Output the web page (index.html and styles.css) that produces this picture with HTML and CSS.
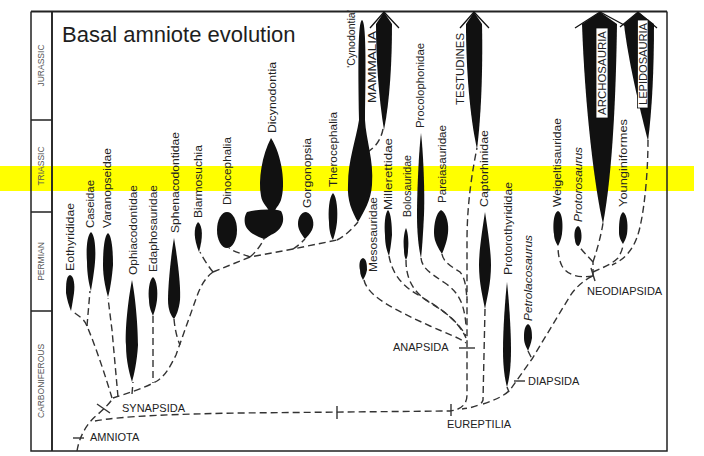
FILE: index.html
```html
<!DOCTYPE html>
<html lang="en">
<head>
<meta charset="utf-8">
<title>Basal amniote evolution</title>
<link rel="stylesheet" href="styles.css">
</head>
<body>
<main class="page">
<svg class="diagram" viewBox="0 0 704 456" width="704" height="456" xmlns="http://www.w3.org/2000/svg">
  <rect class="band" x="0" y="166" width="694" height="25"/>

  <g class="frame">
    <path class="frame-line frame-top" d="M31 11.5 H667"/>
    <path class="frame-line" d="M31 11.5 V451 H667 V11.5"/>
    <path class="frame-line frame-axis" d="M52 11.5 V451"/>
    <path class="frame-line" d="M31 120 H52 M31 212 H52 M31 311 H52"/>
  </g>

  <g class="periods">
    <text class="period" transform="translate(44,65.5) rotate(-90)">JURASSIC</text>
    <text class="period" transform="translate(44,166) rotate(-90)">TRIASSIC</text>
    <text class="period" transform="translate(44,261.5) rotate(-90)">PERMIAN</text>
    <text class="period" transform="translate(44,381) rotate(-90)">CARBONIFEROUS</text>
  </g>

  <text class="title" x="62" y="42">Basal amniote evolution</text>

  <g class="branches">
    <path class="branch" d="M77 451 C79 438, 86 424, 97 415 C104 409, 110 403, 113 398"/>
    <path class="branch" d="M112 398 C106 378, 97 350, 87 326"/>
    <path class="branch" d="M87 326 C84 318, 77 315, 72 311"/>
    <path class="branch" d="M87 326 L90 291"/>
    <path class="branch" d="M118 397 L112 330 L108 298"/>
    <path class="branch" d="M113 398 C125 394, 145 388, 157 381 C165 376, 170 367, 176 355 L197 296 C201 285, 206 277, 213 272"/>
    <path class="branch" d="M132 394 L133 382"/>
    <path class="branch" d="M153 316 L153 383"/>
    <path class="branch" d="M174 319 C175 330, 177 338, 180 345"/>
    <path class="branch" d="M213 272 C208 266, 203 258, 200 252"/>
    <path class="branch" d="M213 272 L250 257 L293 249 L337 240"/>
    <path class="branch" d="M250 257 C243 254, 234 252, 229 248"/>
    <path class="branch" d="M250 257 C256 252, 261 245, 264 239"/>
    <path class="branch" d="M293 249 C298 246, 302 242, 305 239"/>
    <path class="branch" d="M337 240 C345 236, 352 229, 358 222"/>
    <path class="branch" d="M383 129 C381 140, 375 148, 366 153"/>

    <path class="branch" d="M95 421 C120 416, 180 414, 240 413 L450 411 C460 410, 467 405, 467 395 L467 240 C467 205, 472 172, 477 148"/>
    <path class="branch" d="M485 309 L483 400 C482 404, 478 407, 462 409"/>
    <path class="branch" d="M483 404 C495 400, 504 396, 510 390 L532 359 L570 296 C576 287, 584 280, 593 276"/>
    <path class="branch" d="M507 387 L509 392"/>
    <path class="branch" d="M528 351 L532 359"/>
    <path class="branch" d="M593 276 C580 278, 568 276, 562 266 C559 260, 558 253, 558 246"/>
    <path class="branch" d="M593 276 L593 262"/>
    <path class="branch" d="M593 262 C588 256, 583 252, 579 246"/>
    <path class="branch" d="M593 262 C597 250, 601 236, 603 223"/>
    <path class="branch" d="M593 272 C602 268, 612 264, 618 258 C621 253, 623 248, 623 244"/>
    <path class="branch" d="M648 140 C648 170, 645 205, 640 227 C636 245, 628 258, 612 265"/>

    <path class="branch" d="M364 280 C368 298, 400 312, 430 326 C448 334, 460 338, 466 343"/>
    <path class="branch" d="M389 256 C392 272, 400 285, 420 296 C440 308, 458 320, 466 338"/>
    <path class="branch" d="M406 260 C406 276, 411 292, 432 304 C450 315, 460 325, 466 336"/>
    <path class="branch" d="M421 258 C422 268, 430 273, 445 283 C458 292, 464 302, 466 325"/>
    <path class="branch" d="M442 254 C443 262, 452 267, 460 272 C465 278, 466 286, 467 300"/>
  </g>

  <g class="ticks">
    <path class="tick" d="M97 404 L110 413"/>
    <path class="tick" d="M73 438 L84 438"/>
    <path class="tick" d="M337 406 L337 419"/>
    <path class="tick" d="M451 404 L451 416"/>
    <path class="tick" d="M459 348 L475 348"/>
    <path class="tick" d="M514 381 L525 381"/>
    <path class="tick" d="M591 268 L595 281"/>
  </g>

  <g class="shapes">
    <path class="shape" d="M70 275 C74 276, 75 285, 74 293 C73 300, 72 306, 71 311 C69 306, 67 300, 66 293 C66 285, 66 276, 70 275Z"/>
    <path class="shape" d="M91 232 C95 235, 96 250, 95 262 C94 274, 92 284, 91 291 C89 284, 87 274, 87 262 C86 250, 87 235, 91 232Z"/>
    <path class="shape" d="M108 233 C112 236, 113 252, 113 265 C112 278, 110 290, 108 297 C106 290, 103 278, 103 265 C103 252, 104 236, 108 233Z"/>
    <path class="shape" d="M132 280 C136 300, 138 330, 138 345 C137 362, 134 375, 132 382 C130 375, 126 362, 126 345 C125 330, 128 300, 132 280Z"/>
    <path class="shape" d="M153 277 C157 280, 158 292, 157 300 C156 308, 154 313, 153 316 C152 313, 149 308, 149 300 C148 292, 149 280, 153 277Z"/>
    <path class="shape" d="M174 238 C177 255, 181 285, 180 300 C179 310, 176 316, 174 319 C171 316, 168 310, 168 300 C168 285, 171 255, 174 238Z"/>
    <path class="shape" d="M198 222 C203 226, 203 238, 199 252 C194 240, 193 228, 198 222Z"/>
    <ellipse class="shape" cx="227" cy="230" rx="10" ry="18"/>
    <path class="shape" d="M271 138 C282 155, 286 185, 281 200 C279 206, 275 208, 275 212 L269 212 C269 208, 262 204, 261 196 C258 180, 262 155, 271 138Z"/>
    <path class="shape" d="M247 212 C258 209, 275 209, 281 211 C285 218, 284 228, 273 234 C268 236, 266 239, 264 239 C256 236, 247 232, 245 224 C244 219, 245 215, 247 212Z"/>
    <path class="shape" d="M306 212 C313 214, 315 224, 312 230 C310 234, 307 237, 305 239 C302 235, 298 230, 298 224 C298 218, 301 212, 306 212Z"/>
    <path class="shape" d="M333 193 C337 197, 338 212, 337 222 C336 231, 334 237, 333 240 C331 237, 329 231, 329 222 C328 212, 329 197, 333 193Z"/>
    <path class="shape" d="M362 20 C366 22, 366 60, 365 120 C366 140, 374 160, 372 185 C371 200, 364 212, 358 222 C352 212, 347 200, 348 185 C348 160, 356 140, 359 120 C358 60, 358 22, 362 20Z"/>
    <path class="shape" d="M384 12 L392 24 C392 60, 390 100, 384 130 C379 100, 376 60, 376 24Z"/>
    <path class="wing" d="M370 28 L384 12 L399 28"/>

    <path class="shape" d="M363 258 C367 259, 367 266, 367 270 C366 275, 364 278, 363 280 C362 278, 360 275, 360 270 C359 266, 359 259, 363 258Z"/>
    <path class="shape" d="M388 210 C391 213, 392 225, 392 235 C391 245, 390 251, 389 256 C387 251, 385 245, 385 235 C384 225, 385 213, 388 210Z"/>
    <path class="shape" d="M406 228 C408 232, 409 242, 408 250 C408 255, 407 258, 406 260 C405 258, 404 255, 404 250 C403 242, 404 232, 406 228Z"/>
    <path class="shape" d="M421 133 C423 150, 425 190, 424 215 C423 235, 422 250, 421 258 C419 250, 417 235, 417 215 C417 190, 419 150, 421 133Z"/>
    <path class="shape" d="M441 210 C447 213, 449 225, 448 233 C447 242, 444 249, 442 254 C439 249, 434 242, 434 233 C434 224, 436 213, 441 210Z"/>
    <path class="shape" d="M474 12 L482 24 C483 70, 481 118, 477 149 C470 118, 466 70, 466 24Z"/>
    <path class="wing" d="M460 28 L474 12 L489 28"/>
    <path class="shape" d="M485 212 C487 225, 491 250, 491 265 C491 283, 487 298, 485 309 C483 298, 479 283, 479 265 C479 250, 483 225, 485 212Z"/>
    <path class="shape" d="M507 282 C509 300, 511 330, 511 350 C511 368, 509 380, 507 387 C505 380, 503 368, 503 350 C503 330, 505 300, 507 282Z"/>
    <path class="shape" d="M528 324 C532 326, 532 334, 532 338 C531 344, 529 348, 528 351 C527 348, 524 344, 524 338 C524 334, 524 326, 528 324Z"/>
    <path class="shape" d="M558 211 C563 213, 563 228, 562 234 C561 240, 559 244, 558 246 C557 244, 554 240, 554 234 C553 228, 553 213, 558 211Z"/>
    <path class="shape" d="M578 226 C582 228, 582 238, 581 241 C580 244, 579 246, 578 246 C577 246, 575 243, 575 240 C574 236, 574 228, 578 226Z"/>
    <path class="shape" d="M600 12 L617 24 C616 90, 613 170, 603 224 C595 190, 585 110, 582 24Z"/>
    <path class="wing" d="M575 28 L600 12 L626 26"/>
    <path class="shape" d="M623 212 C628 215, 628 228, 627 234 C626 239, 624 242, 623 244 C622 242, 619 238, 619 233 C619 226, 619 215, 623 212Z"/>
    <path class="shape" d="M638 12 L654 24 C654 70, 652 110, 648 141 C640 110, 628 60, 624 24Z"/>
    <path class="wing" d="M620 27 L638 12 L657 28"/>
  </g>

  <g class="boxes">
    <rect class="label-box" x="596" y="28" width="12" height="90"/>
    <rect class="label-box" x="637.5" y="20" width="10.5" height="88"/>
  </g>

  <g class="taxa">
    <text class="taxon" transform="translate(74,271) rotate(-90)" textLength="68" lengthAdjust="spacingAndGlyphs">Eothyrididae</text>
    <text class="taxon" transform="translate(94,228) rotate(-90)" textLength="48" lengthAdjust="spacingAndGlyphs">Caseidae</text>
    <text class="taxon" transform="translate(111,228) rotate(-90)" textLength="80" lengthAdjust="spacingAndGlyphs">Varanopseidae</text>
    <text class="taxon" transform="translate(137,275) rotate(-90)" textLength="90" lengthAdjust="spacingAndGlyphs">Ophiacodontidae</text>
    <text class="taxon" transform="translate(157,272) rotate(-90)" textLength="87" lengthAdjust="spacingAndGlyphs">Edaphosauridae</text>
    <text class="taxon" transform="translate(179,233) rotate(-90)" textLength="101" lengthAdjust="spacingAndGlyphs">Sphenacodontidae</text>
    <text class="taxon" transform="translate(202,218) rotate(-90)" textLength="73" lengthAdjust="spacingAndGlyphs">Biarmosuchia</text>
    <text class="taxon" transform="translate(231,205) rotate(-90)" textLength="68" lengthAdjust="spacingAndGlyphs">Dinocephalia</text>
    <text class="taxon" transform="translate(276,133) rotate(-90)" textLength="71" lengthAdjust="spacingAndGlyphs">Dicynodontia</text>
    <text class="taxon" transform="translate(311,208) rotate(-90)" textLength="70" lengthAdjust="spacingAndGlyphs">Gorgonopsia</text>
    <text class="taxon" transform="translate(337,187) rotate(-90)" textLength="75" lengthAdjust="spacingAndGlyphs">Therocephalia</text>
    <text class="taxon" transform="translate(355,68) rotate(-90)" textLength="58" lengthAdjust="spacingAndGlyphs">‘Cynodontia’</text>
    <text class="clade" transform="translate(376,103) rotate(-90)" textLength="72" lengthAdjust="spacingAndGlyphs">MAMMALIA</text>
    <text class="taxon" transform="translate(377,272) rotate(-90)" textLength="75" lengthAdjust="spacingAndGlyphs">Mesosauridae</text>
    <text class="taxon" transform="translate(392,210) rotate(-90)" textLength="72" lengthAdjust="spacingAndGlyphs">Millerettidae</text>
    <text class="taxon" transform="translate(411,217) rotate(-90)" textLength="62" lengthAdjust="spacingAndGlyphs">Bolosauridae</text>
    <text class="taxon" transform="translate(424,128) rotate(-90)" textLength="85" lengthAdjust="spacingAndGlyphs">Procolophonidae</text>
    <text class="taxon" transform="translate(446,203) rotate(-90)" textLength="78" lengthAdjust="spacingAndGlyphs">Pareiasauridae</text>
    <text class="clade" transform="translate(464,105) rotate(-90)" textLength="72" lengthAdjust="spacingAndGlyphs">TESTUDINES</text>
    <text class="taxon" transform="translate(488,207) rotate(-90)" textLength="77" lengthAdjust="spacingAndGlyphs">Captorhinidae</text>
    <text class="taxon" transform="translate(512,275) rotate(-90)" textLength="93" lengthAdjust="spacingAndGlyphs">Protorothyrididae</text>
    <text class="taxon taxon-italic" transform="translate(532,321) rotate(-90)" textLength="86" lengthAdjust="spacingAndGlyphs">Petrolacosaurus</text>
    <text class="taxon" transform="translate(561,207) rotate(-90)" textLength="89" lengthAdjust="spacingAndGlyphs">Weigeltisauridae</text>
    <text class="taxon taxon-italic" transform="translate(582,222) rotate(-90)" textLength="75" lengthAdjust="spacingAndGlyphs">Protorosaurus</text>
    <text class="clade" transform="translate(606,115) rotate(-90)" textLength="84" lengthAdjust="spacingAndGlyphs">ARCHOSAURIA</text>
    <text class="taxon" transform="translate(627,207) rotate(-90)" textLength="88" lengthAdjust="spacingAndGlyphs">Younginiformes</text>
    <text class="clade" transform="translate(646.5,105) rotate(-90)" textLength="82" lengthAdjust="spacingAndGlyphs">LEPIDOSAURIA</text>
  </g>

  <g class="nodes">
    <text class="clade" x="122" y="412">SYNAPSIDA</text>
    <text class="clade" x="90" y="441">AMNIOTA</text>
    <text class="clade" x="393" y="351">ANAPSIDA</text>
    <text class="clade" x="447" y="428">EUREPTILIA</text>
    <text class="clade" x="528" y="385">DIAPSIDA</text>
    <text class="clade" x="587" y="295">NEODIAPSIDA</text>
  </g>
</svg>
</main>
</body>
</html>
```
FILE: styles.css
```css
html, body {
  margin: 0;
  padding: 0;
  background: #ffffff;
}

.page {
  width: 704px;
  height: 456px;
  overflow: hidden;
  background: #ffffff;
}

.diagram {
  display: block;
  width: 704px;
  height: 456px;
  font-family: "Liberation Sans", Arial, sans-serif;
}

.band {
  fill: #ffff00;
}

.frame-line {
  fill: none;
  stroke: #222222;
  stroke-width: 1.5;
}

.frame-top {
  stroke-width: 2.2;
}

.frame-axis {
  stroke-width: 1.9;
}

.period {
  font-size: 8.5px;
  fill: #555555;
  text-anchor: middle;
}

.title {
  font-size: 22px;
  fill: #1e1e1e;
}

.branch {
  fill: none;
  stroke: #333333;
  stroke-width: 1.4;
  stroke-dasharray: 7 4;
}

.tick {
  fill: none;
  stroke: #333333;
  stroke-width: 1.4;
}

.shape {
  fill: #111111;
}

.wing {
  fill: none;
  stroke: #111111;
  stroke-width: 1.3;
}

.label-box {
  fill: #ffffff;
  stroke: #111111;
  stroke-width: 0.8;
}

.taxon {
  font-size: 11.5px;
  fill: #222222;
}

.taxon-italic {
  font-style: italic;
}

.clade {
  font-size: 11px;
  fill: #222222;
}
```
